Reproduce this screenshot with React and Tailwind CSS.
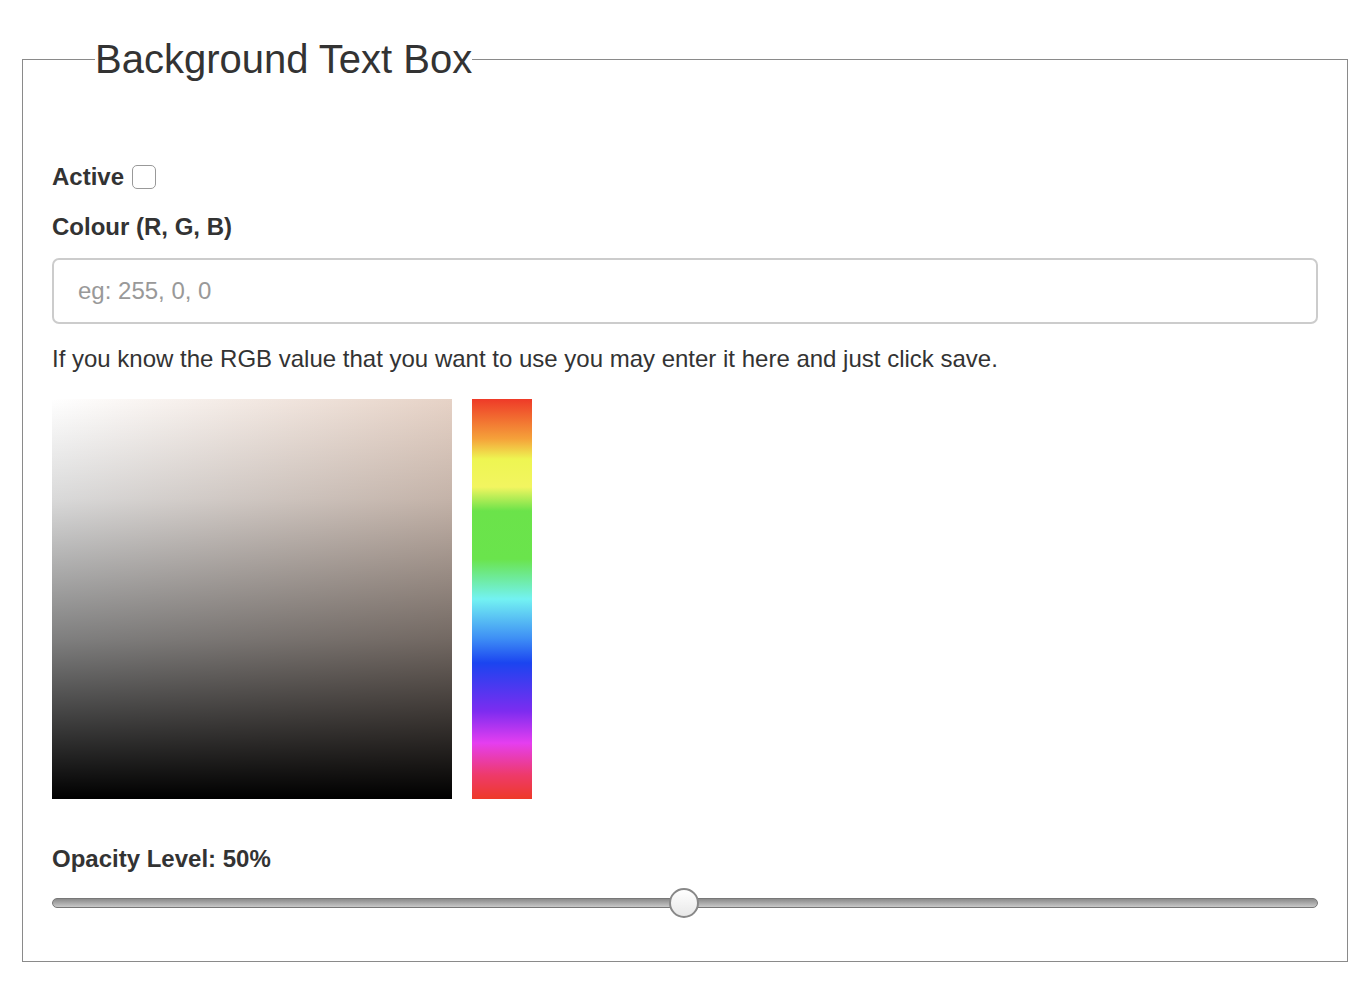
import React from 'react'

export default function App() {
  return (
    <div className="bg-white min-h-[982px] pt-[37px] pl-[22px] font-[Liberation_Sans,Arial,sans-serif] text-[#333]">
      <fieldset className="w-[1326px] h-[925px] border border-[#8a8a8a] px-[29px] pt-0 m-0 min-w-0">
        <legend className="ml-[43px] px-0 text-[40px] leading-[44px] text-[#333]">Background Text Box</legend>
        <div className="pt-[81px] flex items-center gap-[8px]">
          <span className="text-[24px] font-bold leading-[30px]">Active</span>
          <span className="w-[24px] h-[24px] border border-[#999] rounded-[5px] bg-white inline-block" />
        </div>
        <div className="mt-[20px] text-[24px] font-bold leading-[30px]">Colour (R, G, B)</div>
        <input
          placeholder="eg: 255, 0, 0"
          className="mt-[16px] w-full h-[66px] border-2 border-[#ccc] rounded-[7px] px-[24px] text-[24px] placeholder-[#999] outline-none"
        />
        <p className="mt-[20px] text-[24px] leading-[30px]">
          If you know the RGB value that you want to use you may enter it here and just click save.
        </p>
        <div className="mt-[25px] flex gap-[20px]">
          <div className="relative w-[400px] h-[400px] bg-[linear-gradient(to_right,#ffffff,#e6d2c6)]">
            <div className="absolute inset-0 bg-[linear-gradient(to_bottom,rgba(0,0,0,0),rgba(0,0,0,0.15)_25%,rgba(0,0,0,0.5)_60%,#000000)]" />
          </div>
          <div className="w-[60px] h-[400px] bg-[linear-gradient(to_bottom,#ee3a28_0%,#f5a23a_10%,#eef552_15%,#f2f560_22%,#6be34a_28%,#6ae44c_40%,#73f2f2_50%,#3d8df5_60%,#1b44f0_66%,#7c2cf0_78%,#e53ef0_86%,#ee3a6a_94%,#ee3a28_100%)]" />
        </div>
        <div className="mt-[45px] text-[24px] font-bold leading-[30px]">Opacity Level: 50%</div>
        <div className="relative mt-[14px] h-[30px] flex items-center">
          <div className="w-full h-[10px] rounded-full border border-[#777] bg-[linear-gradient(to_bottom,#8a8a8a,#c8c8c8)]" />
          <div className="absolute left-[617px] top-0 w-[30px] h-[30px] rounded-full border-2 border-[#888] bg-[linear-gradient(to_bottom,#ffffff,#e8e8e8)]" />
        </div>
      </fieldset>
    </div>
  )
}
